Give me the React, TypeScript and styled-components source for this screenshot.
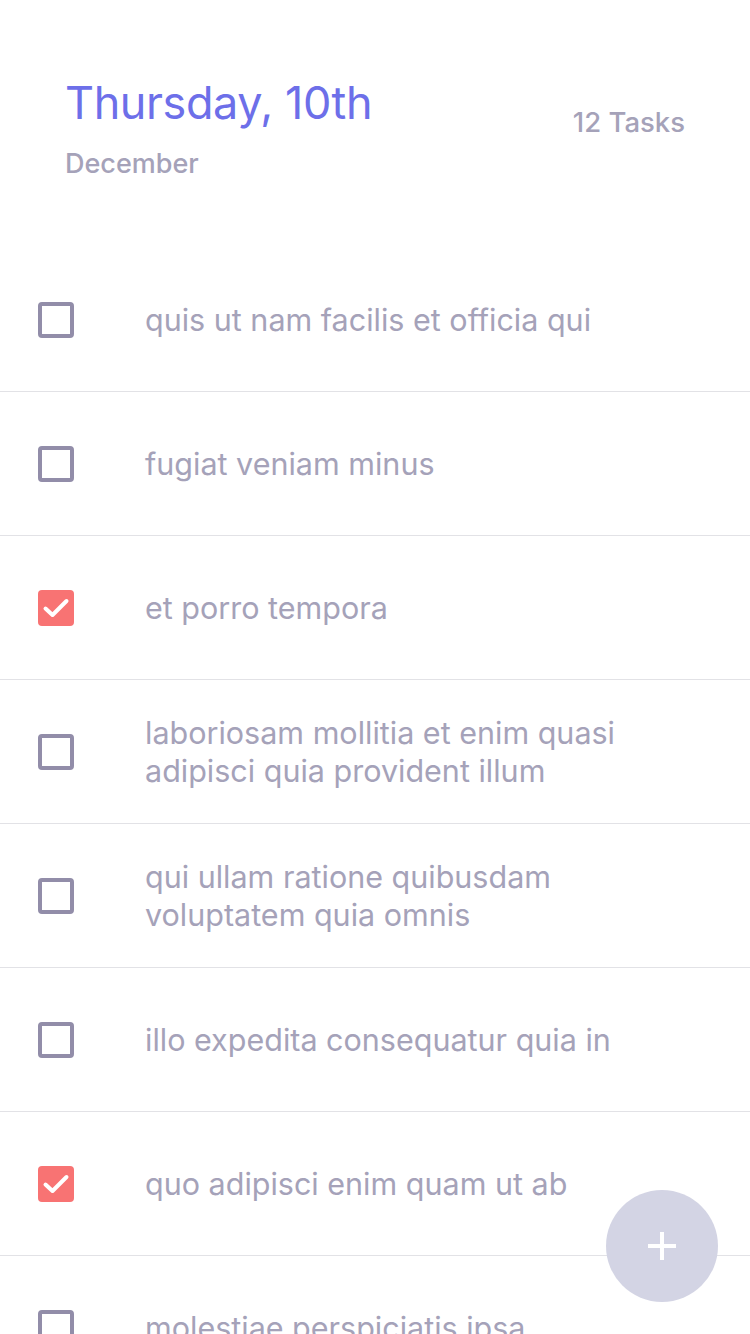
import React from "react";
import styled, { createGlobalStyle } from "styled-components";

const GlobalStyle = createGlobalStyle`
  html, body { margin: 0; padding: 0; background: #ffffff; }
  body { font-family: Inter, "Noto Sans", "Liberation Sans", sans-serif; -webkit-font-smoothing: antialiased; }
  * { box-sizing: border-box; }
`;

const Page = styled.div`
  width: 750px;
  height: 1334px;
  overflow: hidden;
  position: relative;
  background: #fff;
`;

const Header = styled.header`
  display: flex;
  justify-content: space-between;
  align-items: flex-start;
  padding: 75px 65px 0 65px;
  height: 248px;
`;

const TitleBlock = styled.div`
  display: flex;
  flex-direction: column;
`;

const Title = styled.h1`
  margin: 0;
  font-size: 45px;
  font-weight: 400;
  line-height: 56px;
  color: #6d6fe9;
  letter-spacing: -0.4px;
`;

const Month = styled.div`
  margin-top: 17px;
  font-size: 27px;
  font-weight: 500;
  line-height: 32px;
  color: #a5a2b9;
`;

const Count = styled.div`
  margin-top: 31px;
  font-size: 27.5px;
  font-weight: 500;
  line-height: 32px;
  color: #a5a2b9;
`;

const List = styled.ul`
  list-style: none;
  margin: 0;
  padding: 0;
`;

const Row = styled.li`
  display: flex;
  align-items: center;
  height: 144px;
  border-bottom: 1px solid #e2e2e6;
  padding-left: 38px;
`;

const Box = styled.span<{ $checked: boolean }>`
  flex: 0 0 36px;
  width: 36px;
  height: 36px;
  border-radius: 4px;
  display: flex;
  align-items: center;
  justify-content: center;
  border: ${(p) => (p.$checked ? "none" : "4px solid #928da9")};
  background: ${(p) => (p.$checked ? "#f87373" : "transparent")};
`;

const Label = styled.span`
  margin-left: 71px;
  font-size: 30.5px;
  line-height: 38px;
  color: #a5a2b9;
  max-width: 520px;
`;

const Fab = styled.button`
  position: absolute;
  left: 606px;
  top: 1190px;
  width: 112px;
  height: 112px;
  border-radius: 50%;
  border: none;
  background: #d3d4e4;
  display: flex;
  align-items: center;
  justify-content: center;
  padding: 0;
`;

const tasks = [
  { text: "quis ut nam facilis et officia qui", done: false },
  { text: "fugiat veniam minus", done: false },
  { text: "et porro tempora", done: true },
  { text: "laboriosam mollitia et enim quasi adipisci quia provident illum", done: false },
  { text: "qui ullam ratione quibusdam voluptatem quia omnis", done: false },
  { text: "illo expedita consequatur quia in", done: false },
  { text: "quo adipisci enim quam ut ab", done: true },
  { text: "molestiae perspiciatis ipsa", done: false },
];

export default function App() {
  return (
    <Page>
      <GlobalStyle />
      <Header>
        <TitleBlock>
          <Title>Thursday, 10th</Title>
          <Month>December</Month>
        </TitleBlock>
        <Count>12 Tasks</Count>
      </Header>
      <List>
        {tasks.map((t, i) => (
          <Row key={i}>
            <Box $checked={t.done}>
              {t.done && (
                <svg width="30" height="30" viewBox="0 0 30 30">
                  <path d="M4.5 15.5 L11.5 22 L25.5 8" fill="none" stroke="#fff" strokeWidth="4" strokeLinecap="round" strokeLinejoin="round" />
                </svg>
              )}
            </Box>
            <Label>{t.text}</Label>
          </Row>
        ))}
      </List>
      <Fab aria-label="Add task">
        <svg width="30" height="30" viewBox="0 0 30 30">
          <path d="M15 1 V29 M1 15 H29" stroke="#fff" strokeWidth="4" />
        </svg>
      </Fab>
    </Page>
  );
}
